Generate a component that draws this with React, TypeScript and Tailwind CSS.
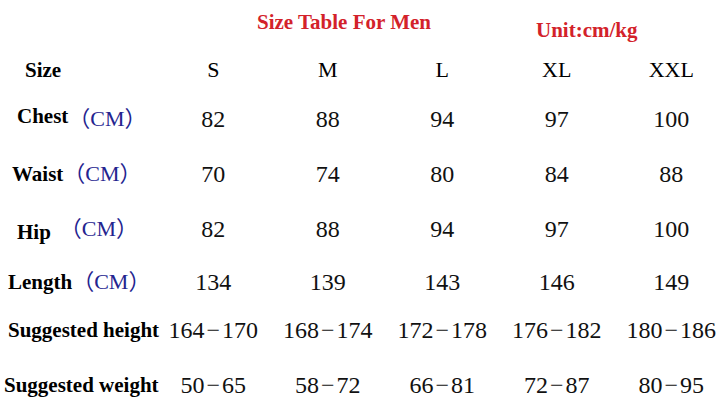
import React from 'react';

type Row = {
    label: string;
    unit?: boolean;
    labelPad: string;
    labelShift?: string;
    height: string;
    values: string[];
};

const sizes = ['S', 'M', 'L', 'XL', 'XXL'];

const rows: Row[] = [
    { label: 'Chest', unit: true, labelPad: 'pl-[17px]', labelShift: 'pb-[5px]', height: 'h-[48px]', values: ['82', '88', '94', '97', '100'] },
    { label: 'Waist', unit: true, labelPad: 'pl-[12px]', height: 'h-[62px]', values: ['70', '74', '80', '84', '88'] },
    { label: 'Hip', unit: true, labelPad: 'pl-[17px]', labelShift: 'pt-[7px]', height: 'h-[48px]', values: ['82', '88', '94', '97', '100'] },
    { label: 'Length', unit: true, labelPad: 'pl-[8px]', height: 'h-[58px]', values: ['134', '139', '143', '146', '149'] },
    { label: 'Suggested height', labelPad: 'pl-[8px]', height: 'h-[38px]', values: ['164-170', '168-174', '172-178', '176-182', '180-186'] },
    { label: 'Suggested weight', labelPad: 'pl-[4px]', height: 'h-[72px]', values: ['50-65', '58-72', '66-81', '72-87', '80-95'] },
];

// ranges get a wider dash, like the printed chart
const Value: React.FC<{ v: string }> = ({ v }) => {
    const [a, b] = v.split('-');
    if (b === undefined) return <>{v}</>;
    return (
        <>
            {a}
            <span className="px-[2px]">−</span>
            {b}
        </>
    );
};

const App: React.FC = () => {
    return (
        <div className="w-[721px] h-[420px] overflow-hidden bg-white font-['Liberation_Serif','Times_New_Roman',serif]">
            {/* Title */}
            <div className="flex h-[45px] text-[21px] leading-[21px] font-bold text-[#d3222a]">
                <div className="pl-[257px] pt-[12px] w-[536px] shrink-0">Size Table For Men</div>
                <div className="pt-[20px]">Unit:cm/kg</div>
            </div>

            {/* Header row */}
            <div className="grid grid-cols-[156px_repeat(5,114.5px)] h-[50px] items-center">
                <div className="pl-[25px] text-[21px] leading-[21px] font-bold text-black">Size</div>
                {sizes.map((s) => (
                    <div key={s} className="text-center text-[22px] leading-[22px] text-black">{s}</div>
                ))}
            </div>

            {rows.map((row) => (
                <div key={row.label} className={`grid grid-cols-[156px_repeat(5,114.5px)] items-center ${row.height}`}>
                    <div className={`flex items-center justify-between pr-[18px] ${row.labelPad}`}>
                        <span className={`text-[21px] leading-[21px] font-bold text-black whitespace-nowrap ${row.labelShift ?? ''}`}>
                            {row.label}
                        </span>
                        {row.unit && (
                            <span className="text-[22px] leading-[22px] text-[#24248f] whitespace-nowrap font-['Liberation_Serif','Noto_Sans_CJK_SC',serif]">
                                （CM）
                            </span>
                        )}
                    </div>
                    {row.values.map((v, i) => (
                        <div key={i} className="text-center text-[24px] leading-[24px] text-[#111] whitespace-nowrap">
                            <Value v={v} />
                        </div>
                    ))}
                </div>
            ))}
        </div>
    );
};

export default App;
